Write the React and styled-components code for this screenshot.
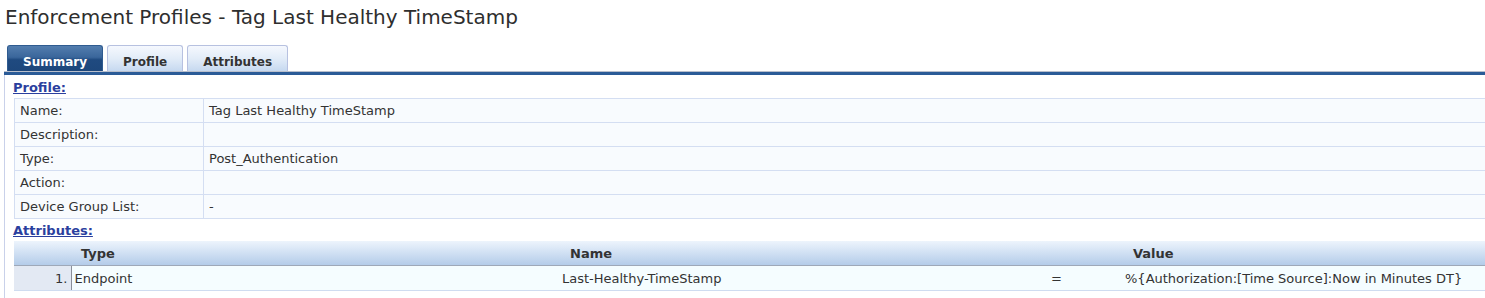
import React from "react";
import styled, { createGlobalStyle } from "styled-components";

const Global = createGlobalStyle`
  html, body { margin: 0; padding: 0; background: #fff; }
  body {
    font-family: "DejaVu Sans", Verdana, sans-serif;
    color: #333;
    overflow: hidden;
  }
`;

const Page = styled.div`
  width: 1485px;
`;

const Title = styled.h1`
  margin: 6px 0 0 5px;
  font-size: 20px;
  font-weight: normal;
  line-height: 23px;
  color: #2e2e2e;
`;

const TabBar = styled.div`
  display: flex;
  gap: 4px;
  margin-top: 16px;
  padding-left: 7px;
  height: 26px;
  align-items: flex-end;
`;

const Tab = styled.div`
  box-sizing: border-box;
  height: 26px;
  padding: 9px 15px 3px;
  font-size: 12px;
  font-weight: bold;
  line-height: 14px;
  border-radius: 3px 3px 0 0;
  white-space: nowrap;
  color: ${(p) => (p.$active ? "#fff" : "#333")};
  border: 1px solid ${(p) => (p.$active ? "#2f5b90" : "#b7c1e0")};
  border-bottom: none;
  background: ${(p) =>
    p.$active
      ? "linear-gradient(#537dae, #3a669b 45%, #1f4a80 55%, #1d477c)"
      : "linear-gradient(#f5f8fe, #e2ecf8 50%, #c6d9f0)"};
`;

const Bar = styled.div`
  margin-left: 4px;
  height: 3px;
  border-top: 1px solid #b9bfcc;
  background: #2b5b97;
`;

const Panel = styled.div`
  margin-left: 4px;
  border-left: 1px solid #c9d1ea;
  padding: 5px 0 9px 8px;
  overflow: hidden;
`;

const SectionLink = styled.a`
  display: block;
  font-size: 13px;
  font-weight: bold;
  line-height: 15px;
  color: #2b3f9e;
  text-decoration: underline;
  margin-top: ${(p) => p.$top || 0}px;
  margin-bottom: ${(p) => p.$bottom || 0}px;
`;

const InfoTable = styled.table`
  border-collapse: collapse;
  width: calc(100% + 12px);
  margin-left: 1px;
  font-size: 13px;
`;

const InfoCell = styled.td`
  border: 1px solid #d4def2;
  background: #f8fbfe;
  height: 23px;
  line-height: 15px;
  padding: 0 5px;
  color: #333;
  width: ${(p) => (p.$label ? "178px" : "auto")};
  white-space: nowrap;
`;

const AttrTable = styled.table`
  border-collapse: collapse;
  width: calc(100% + 12px);
  margin-left: 1px;
  font-size: 13px;
  table-layout: fixed;
`;

const HeadCell = styled.th`
  height: 24px;
  padding: 0 0 0 ${(p) => p.$pad ?? 10}px;
  text-align: left;
  font-weight: bold;
  color: #333;
  line-height: 15px;
  background: linear-gradient(#edf4fc, #d3e2f4 45%, #b4cce9);
  border-bottom: 1px solid #9ea8b8;
  white-space: nowrap;
`;

const Cell = styled.td`
  height: 24px;
  line-height: 15px;
  padding: 0 ${(p) => (p.$index ? "3px" : "0")} 0 ${(p) => (p.$index ? "0" : `${p.$pad ?? 3}px`)};
  text-align: ${(p) => (p.$index ? "right" : "left")};
  background: ${(p) => (p.$index ? "#e3e9f3" : "#f5fdff")};
  border-right: ${(p) => (p.$index ? "1px solid #8a8f99" : "none")};
  border-bottom: 1px solid #cfdcf0;
  color: #333;
  white-space: nowrap;
  overflow: hidden;
`;

const profileRows = [
  ["Name:", "Tag Last Healthy TimeStamp"],
  ["Description:", ""],
  ["Type:", "Post_Authentication"],
  ["Action:", ""],
  ["Device Group List:", "-"],
];

export default function App() {
  return (
    <Page>
      <Global />
      <Title>Enforcement Profiles - Tag Last Healthy TimeStamp</Title>
      <TabBar>
        <Tab $active>Summary</Tab>
        <Tab>Profile</Tab>
        <Tab>Attributes</Tab>
      </TabBar>
      <Bar />
      <Panel>
        <SectionLink $bottom={3}>Profile:</SectionLink>
        <InfoTable>
          <tbody>
            {profileRows.map(([k, v]) => (
              <tr key={k}>
                <InfoCell $label>{k}</InfoCell>
                <InfoCell>{v}</InfoCell>
              </tr>
            ))}
          </tbody>
        </InfoTable>
        <SectionLink $top={4} $bottom={3}>Attributes:</SectionLink>
        <AttrTable>
          <colgroup>
            <col style={{ width: 57 }} />
            <col style={{ width: 487 }} />
            <col style={{ width: 489 }} />
            <col style={{ width: 74 }} />
            <col />
          </colgroup>
          <thead>
            <tr>
              <HeadCell />
              <HeadCell>Type</HeadCell>
              <HeadCell $pad={12}>Name</HeadCell>
              <HeadCell />
              <HeadCell $pad={12}>Value</HeadCell>
            </tr>
          </thead>
          <tbody>
            <tr>
              <Cell $index>1.</Cell>
              <Cell>Endpoint</Cell>
              <Cell $pad={4}>Last-Healthy-TimeStamp</Cell>
              <Cell $pad={4}>=</Cell>
              <Cell $pad={4}>%{"{"}Authorization:[Time Source]:Now in Minutes DT{"}"}</Cell>
            </tr>
          </tbody>
        </AttrTable>
      </Panel>
    </Page>
  );
}
